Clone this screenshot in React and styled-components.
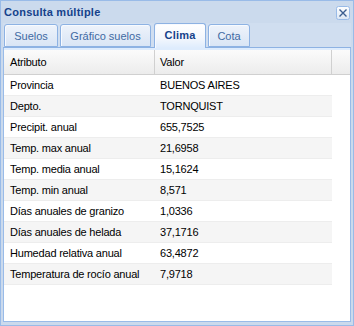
import React from "react";
import styled, { createGlobalStyle } from "styled-components";

const Global = createGlobalStyle`
  html, body { margin: 0; padding: 0; background: #ffffff; }
  body { font-family: "Liberation Sans", Arial, sans-serif; font-size: 11px; }
  * { box-sizing: border-box; }
`;

const Window = styled.div`
  width: 354px;
  height: 326px;
  border: 1px solid #99bbe8;
  background: #cbdaed;
  padding: 0 2px 3px 2px;
  display: flex;
  flex-direction: column;
`;

const TitleBar = styled.div`
  height: 22px;
  display: flex;
  align-items: flex-start;
  justify-content: space-between;
  flex: none;
`;

const Title = styled.div`
  margin: 5px 0 0 1px;
  font-family: "Liberation Sans", Arial, sans-serif;
  font-weight: bold;
  font-size: 11px;
  letter-spacing: 0.25px;
  color: #15428b;
  line-height: 13px;
`;

const CloseBtn = styled.div`
  width: 14px;
  height: 14px;
  margin: 5px 1px 0 0;
  display: flex;
`;

const TabStrip = styled.div`
  flex: none;
  display: flex;
  align-items: flex-end;
  gap: 2px;
  padding: 1px 0 0 1px;
  height: 25px;
  border-bottom: 1px solid #8db2e3;
  background: #d0def0;
`;

const Tab = styled.div`
  width: ${(p) => p.$w}px;
  height: ${(p) => (p.$active ? 25 : 23)}px;
  margin-bottom: ${(p) => (p.$active ? -1 : 0)}px;
  margin-left: ${(p) => p.$ml || 0}px;
  border: 1px solid #8db2e3;
  border-bottom: ${(p) => (p.$active ? "none" : "1px solid #8db2e3")};
  border-radius: 3px 3px 0 0;
  background: ${(p) =>
    p.$active
      ? "linear-gradient(#ffffff, #f3f7fd 60%, #deecfd)"
      : "linear-gradient(#eef3fb, #d9e5f5)"};
  box-shadow: inset 1px 1px 0 #f7faff;
  color: ${(p) => (p.$active ? "#15428b" : "#416aa3")};
  font-weight: ${(p) => (p.$active ? "bold" : "normal")};
  font-size: 11px;
  text-align: center;
  line-height: 20px;
  padding-top: 1px;
  letter-spacing: ${(p) => (p.$active ? "0.2px" : "0")};
`;

const Spacer = styled.div`
  flex: none;
  height: 2px;
  background: #deecfd;
  border-left: 1px solid #99bbe8;
  border-right: 1px solid #99bbe8;
`;

const Body = styled.div`
  flex: 1;
  background: #ffffff;
  border: 1px solid #99bbe8;
  border-top: none;
  display: flex;
  flex-direction: column;
`;

const HeaderRow = styled.div`
  display: flex;
  height: 25px;
  background: linear-gradient(#fbfbfb, #ececec);
  border-bottom: 1px solid #d0d0d0;
  flex: none;
`;

const HeaderCell = styled.div`
  width: ${(p) => p.$w}px;
  border-right: 1px solid #d0d0d0;
  padding-left: ${(p) => p.$pl}px;
  line-height: 24px;
  color: #000;
  letter-spacing: -0.2px;
`;

const Filler = styled.div`
  flex: 1;
`;

const Row = styled.div`
  display: flex;
  width: 328px;
  height: 21px;
  border-bottom: 1px solid #ededed;
  background: ${(p) => (p.$alt ? "#f5f5f5" : "#ffffff")};
`;

const Cell = styled.div`
  width: ${(p) => p.$w}px;
  padding-left: ${(p) => p.$pl}px;
  line-height: 20px;
  color: #000;
  letter-spacing: -0.2px;
  white-space: nowrap;
`;

const data = [
  ["Provincia", "BUENOS AIRES"],
  ["Depto.", "TORNQUIST"],
  ["Precipit. anual", "655,7525"],
  ["Temp. max anual", "21,6958"],
  ["Temp. media anual", "15,1624"],
  ["Temp. min anual", "8,571"],
  ["Días anuales de granizo", "1,0336"],
  ["Días anuales de helada", "37,1716"],
  ["Humedad relativa anual", "63,4872"],
  ["Temperatura de rocío anual", "7,9718"],
];

const tabs = [
  { label: "Suelos", w: 54 },
  { label: "Gráfico suelos", w: 91 },
  { label: "Clima", w: 52, active: true, ml: 1 },
  { label: "Cota", w: 42 },
];

export default function App() {
  return (
    <>
      <Global />
      <Window>
        <TitleBar>
          <Title>Consulta múltiple</Title>
          <CloseBtn>
            <svg width="14" height="14" viewBox="0 0 14 14">
              <defs>
                <linearGradient id="cb" x1="0" y1="0" x2="0" y2="1">
                  <stop offset="0" stopColor="#ffffff" />
                  <stop offset="1" stopColor="#dbe6f4" />
                </linearGradient>
              </defs>
              <rect x="0.5" y="0.5" width="13" height="13" rx="2" fill="url(#cb)" stroke="#99bbe8" />
              <path d="M3.5 3.5 L10.5 10.5 M10.5 3.5 L3.5 10.5" stroke="#3b5d8f" strokeWidth="1.4" />
            </svg>
          </CloseBtn>
        </TitleBar>
        <TabStrip>
          {tabs.map((t) => (
            <Tab key={t.label} $w={t.w} $active={t.active} $ml={t.ml}>
              {t.label}
            </Tab>
          ))}
        </TabStrip>
        <Spacer />
        <Body>
          <HeaderRow>
            <HeaderCell $w={151} $pl={6}>Atributo</HeaderCell>
            <HeaderCell $w={177} $pl={5}>Valor</HeaderCell>
            <Filler />
          </HeaderRow>
          {data.map(([k, v], i) => (
            <Row key={k} $alt={i % 2 === 1}>
              <Cell $w={151} $pl={6}>{k}</Cell>
              <Cell $w={177} $pl={5}>{v}</Cell>
            </Row>
          ))}
        </Body>
      </Window>
    </>
  );
}
